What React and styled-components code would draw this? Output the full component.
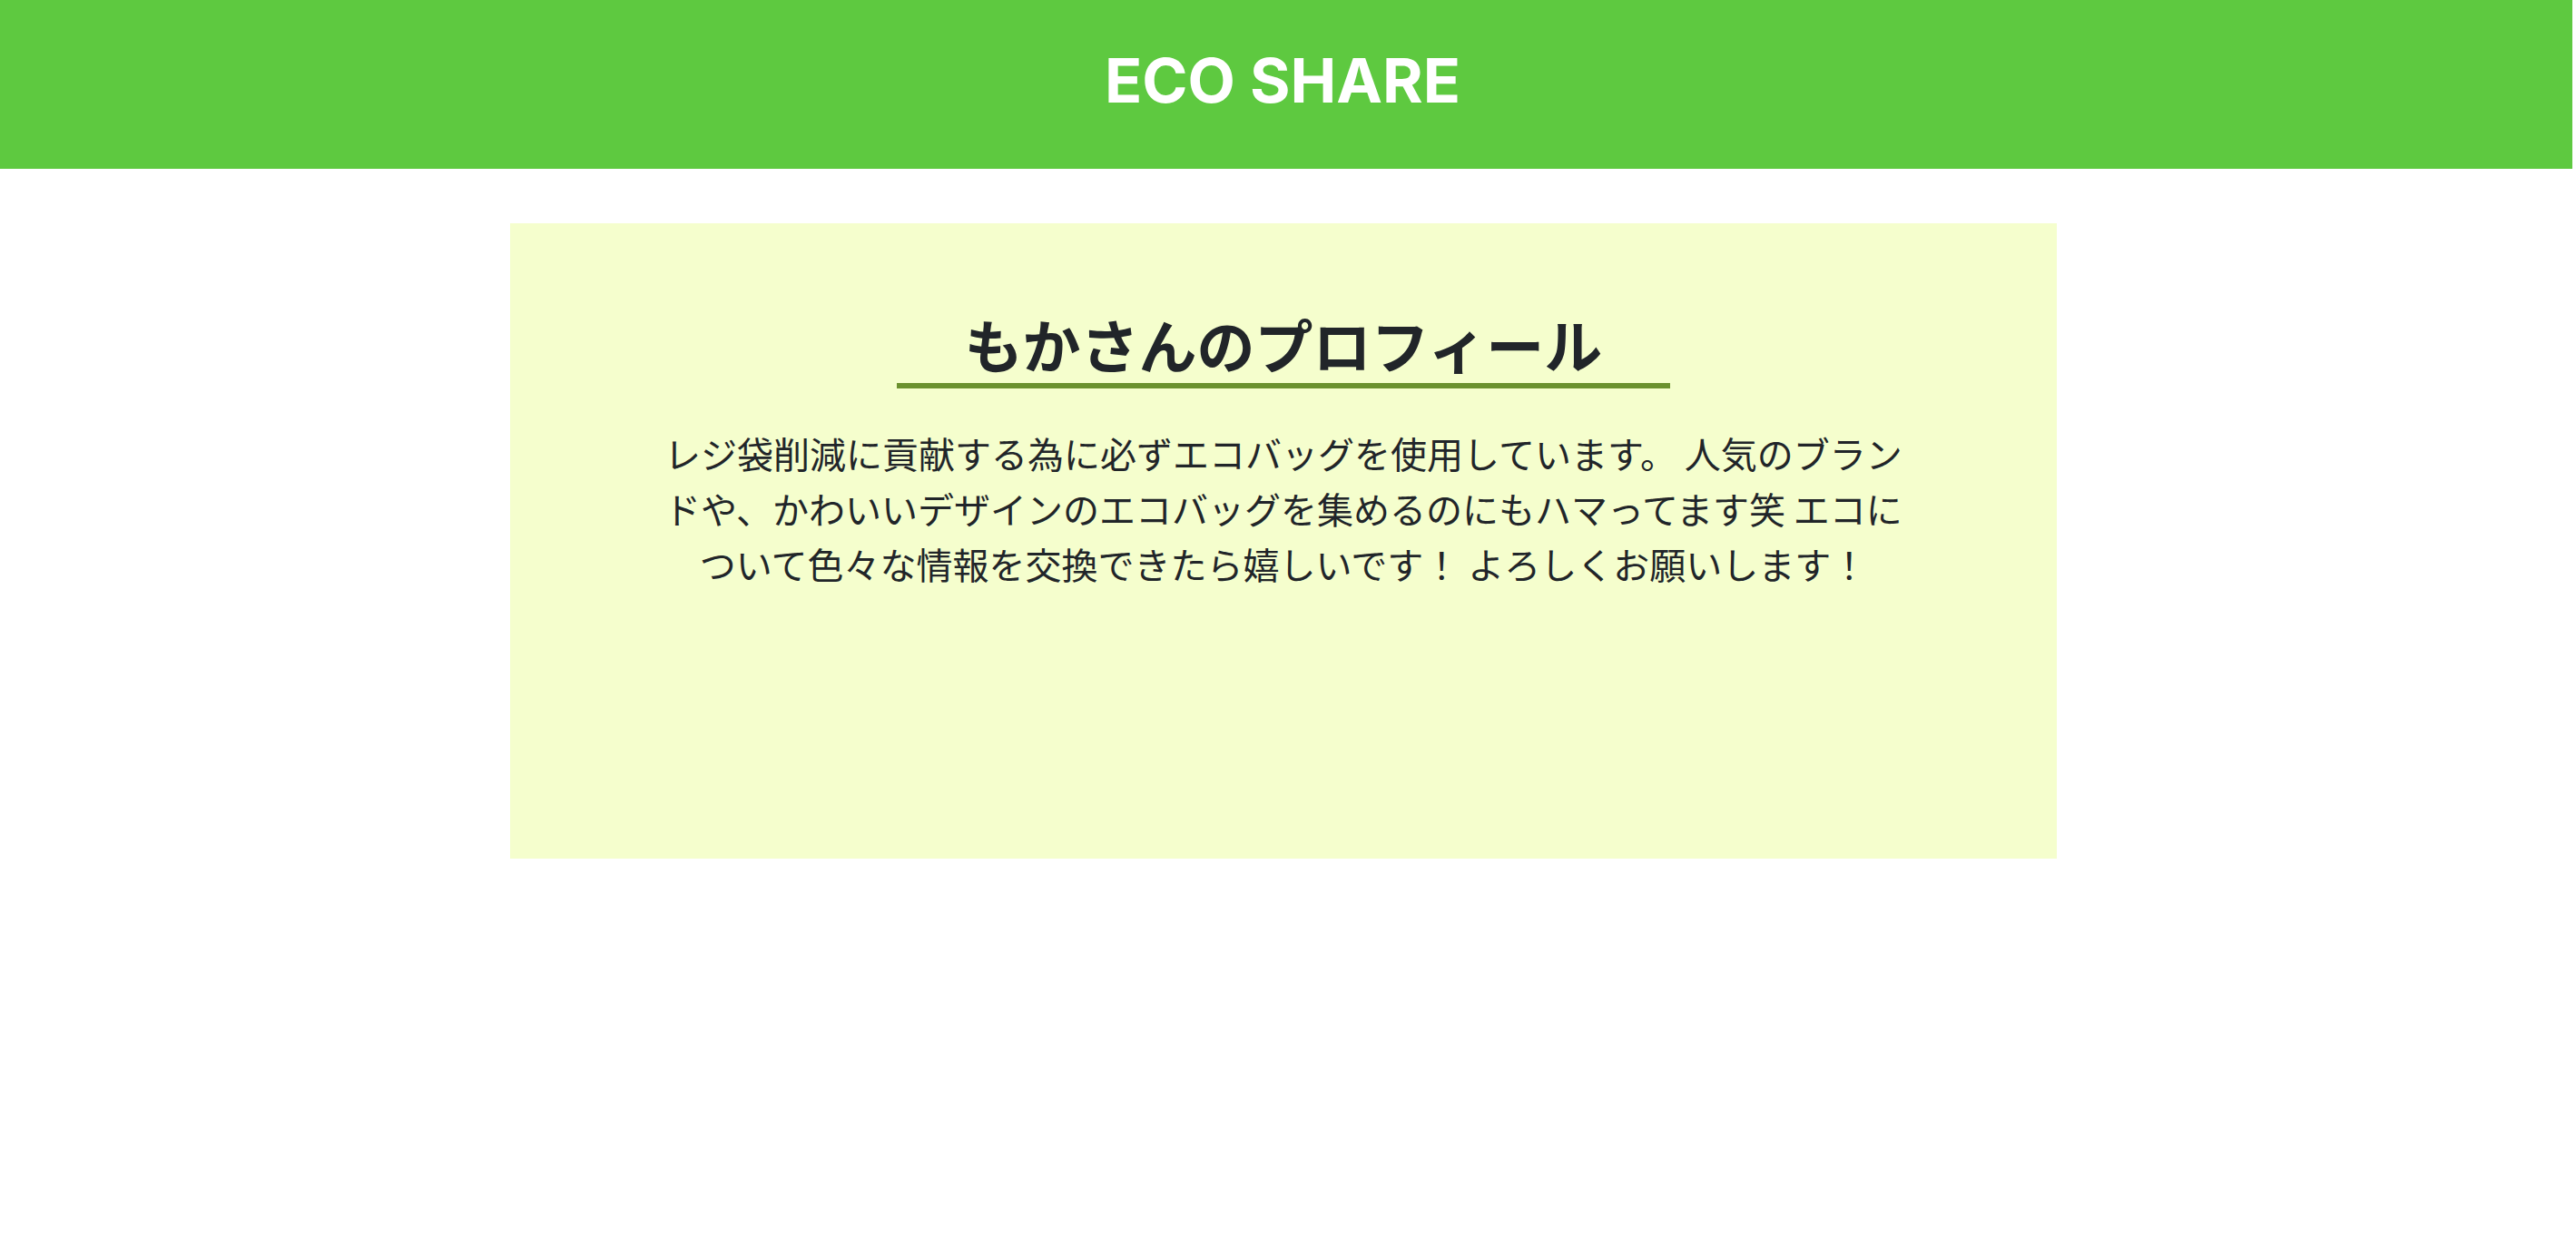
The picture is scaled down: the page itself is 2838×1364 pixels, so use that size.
import React from 'react'
import styled, { createGlobalStyle } from 'styled-components'

const GlobalStyle = createGlobalStyle`
  * {
    box-sizing: border-box;
  }
  body {
    margin: 0;
    background: #fff;
    font-family: "Noto Sans CJK JP", "Noto Sans", sans-serif;
    color: #212529;
  }
`

const profile = {
  name: 'もか',
  intro:
    'レジ袋削減に貢献する為に必ずエコバッグを使用しています。 人気のブランドや、かわいいデザインのエコバッグを集めるのにもハマってます笑 エコについて色々な情報を交換できたら嬉しいです！ よろしくお願いします！',
}

const App = () => {
  return (
    <>
      <GlobalStyle />
      <Page>
        <Header>
          <Logo>ECO SHARE</Logo>
        </Header>
        <Main>
          <ProfileCard>
            <Title>
              <span>{profile.name}さんのプロフィール</span>
            </Title>
            <Intro>{profile.intro}</Intro>
          </ProfileCard>
        </Main>
      </Page>
    </>
  )
}

const Page = styled.div`
  width: 2834px;
  min-height: 1364px;
  display: flex;
  flex-direction: column;
`

const Header = styled.header`
  height: 186px;
  background-color: #5ec940;
  display: flex;
  justify-content: center;
  align-items: center;
  padding-right: 8px;
`

const Logo = styled.h1`
  margin: 0 0 10px;
  color: #fff;
  font-family: "Inter", "Liberation Sans", sans-serif;
  font-weight: 700;
  font-size: 68px;
  letter-spacing: 0;
`

const Main = styled.main`
  display: flex;
  justify-content: center;
  padding: 60px 6px 0 0;
`

const ProfileCard = styled.section`
  width: 1704px;
  height: 700px;
  background-color: #f5fecd;
  display: flex;
  flex-direction: column;
  align-items: center;
  padding: 94px 156px 0;
`

const Title = styled.h2`
  width: 852px;
  margin: 0;
  padding-bottom: 5px;
  border-bottom: 6px solid #6b912e;
  text-align: center;
  font-size: 64px;
  font-weight: 700;
  line-height: 1.2;
  color: #212529;
`

const Intro = styled.p`
  margin: 41px 0 0;
  text-align: center;
  font-size: 40px;
  line-height: 61px;
  color: #212529;
`

export default App
